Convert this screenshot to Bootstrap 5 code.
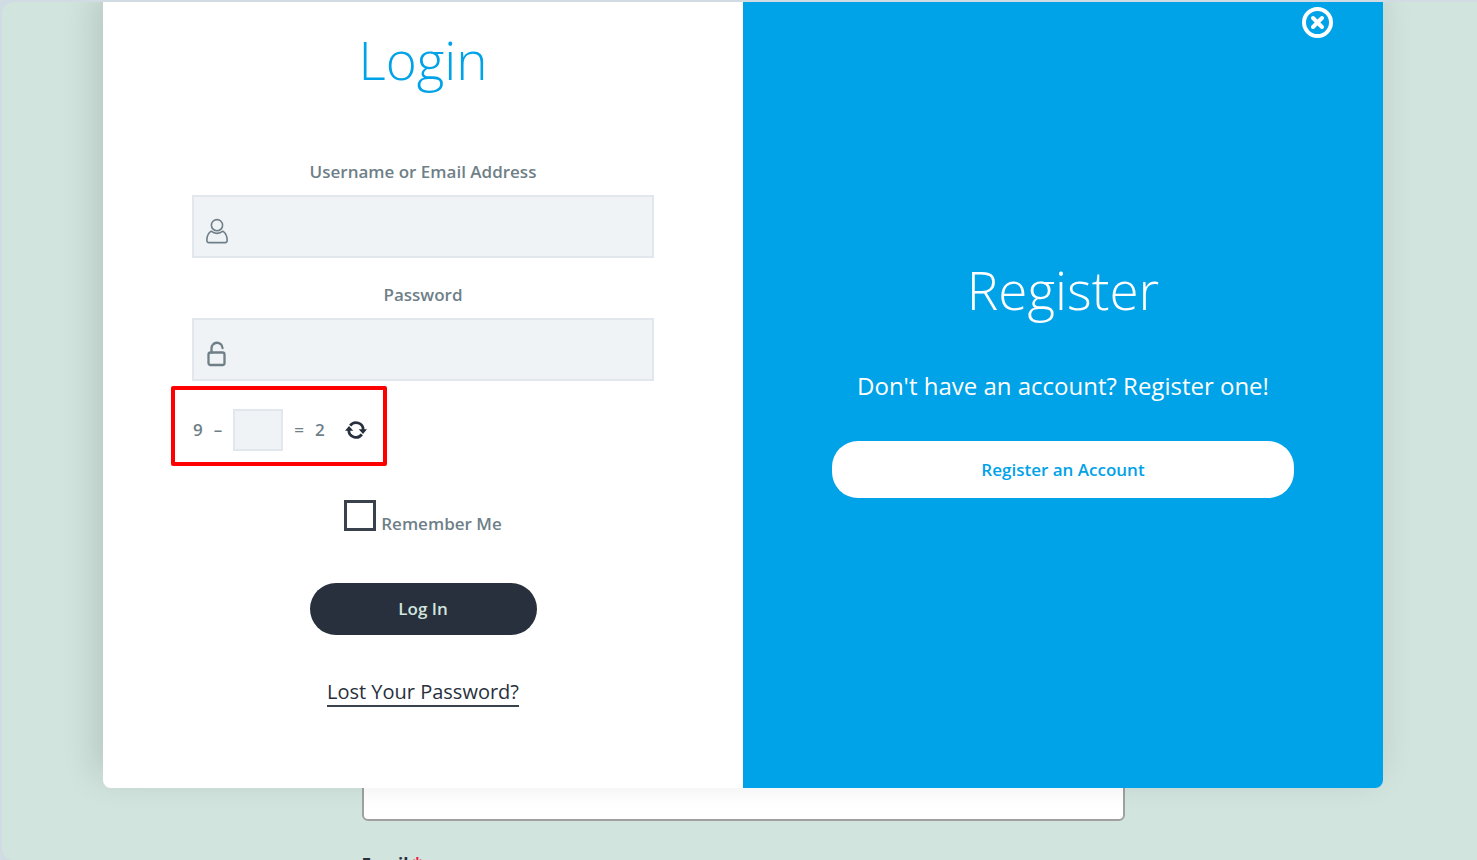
<!DOCTYPE html>
<html lang="en">
<head>
<meta charset="utf-8">
<meta name="viewport" content="width=device-width, initial-scale=1">
<title>Login</title>
<link href="https://cdn.jsdelivr.net/npm/bootstrap@5.3.0/dist/css/bootstrap.min.css" rel="stylesheet">
<style>
  body { background: #d1dbe4; font-family: "Open Sans", "Noto Sans", sans-serif; font-size: 17px; line-height: 24px; color: #6f7f88; }
  .stage { height: 100vh; padding: 2px 0 0 2px; }
  .page-area { background: #d1e4dd; border-radius: 12px 0 0 12px; padding-left: 7px; }
  .page-form { max-width: 763px; padding-top: 743px; }
  .page-input { height: 76px; border: 2px solid #a0a0a0; border-radius: 6px; background: #fff; }
  .page-label { color: #28303d; font-weight: 700; }
  .page-label span { color: #f0143c; }
  .auth-layer { left: 7px; }
  .auth-box { max-width: 1280px; border-radius: 0 0 8px 8px; box-shadow: -6px -12px 36px rgba(0, 0, 0, .14); }
  .auth-login { background: #fff; padding: 26px 89px 81px; border-radius: 0 0 0 8px; }
  .auth-register { background: #00a2e8; color: #fff; padding: 0 89px 34px; border-radius: 0 0 8px 0; }
  .auth-title { font-size: 53px; line-height: 64px; font-weight: 300; }
  .auth-login .auth-title { color: #00a2e8; margin-bottom: 68px; }
  .auth-register .auth-title { margin-bottom: 46px; }
  .auth-label { font-weight: 600; margin-bottom: 11px; }
  .field + .field { margin-top: 25px; }
  .field input { height: 63px; padding-left: 48px; }
  .field svg { left: 14px; top: 23px; }
  .auth-login .form-control { background-color: #eff3f6; border: 2px solid #e2e7ee; border-radius: 0; }
  .captcha { align-self: flex-start; margin: 5px 0 34px -21px; padding: 19px 16px 11px 18px; border: 4px solid #f00; border-radius: 2px; gap: 11px; font-weight: 600; }
  .captcha .form-control { width: 50px; height: 42px; }
  .captcha .refresh { margin-left: 9px; color: #28303d; line-height: 0; }
  .remember { gap: 5px; margin-bottom: 47px; }
  .remember input[type=checkbox] { width: 32px; height: 31px; margin: 0 0 5px; border: 3px solid #39414d; border-radius: 0; }
  .remember label { font-weight: 600; }
  .pill { border-radius: 26px; font-size: 17px; line-height: 24px; font-weight: 600; }
  .pill-dark, .pill-dark:hover { background: #28303d; color: #d1e4dd; width: 227px; padding: 14px; margin-bottom: 44px; }
  .pill-light, .pill-light:hover { background: #fff; color: #00a2e8; height: 57px; }
  .lost { font-size: 20px; line-height: 26px; color: #28303d; border-bottom: 2px solid #39414d; }
  .invite { font-size: 24px; line-height: 36px; margin-bottom: 37px; }
  .close-auth { top: 5px; right: 50px; line-height: 0; }
</style>
</head>
<body>
<div class="stage overflow-hidden">
  <div class="page-area position-relative h-100 overflow-hidden">
    <div class="page-form mx-auto">
      <input id="email-above" type="text" class="page-input w-100 d-block" aria-label="Name">
      <label class="page-label d-block pt-4 mt-2" for="email-above">Email <span>*</span></label>
    </div>
    <div class="auth-layer position-absolute top-0 end-0">
      <main class="auth-box row g-0 mx-auto position-relative">
        <form class="auth-login col-6 d-flex flex-column align-items-center">
          <h1 class="auth-title">Login</h1>
          <div class="field w-100 text-center">
            <label class="auth-label d-block" for="user">Username or Email Address</label>
            <div class="position-relative">
              <input id="user" type="text" class="form-control">
              <svg class="position-absolute" width="22" height="26" viewBox="0 0 22 26" fill="none" stroke="currentColor" stroke-width="1.6" stroke-linejoin="round"><circle cx="11" cy="7.2" r="5.6"/><path d="M5.2 13.2C2.6 14.9.8 18.500.8 22.300c0 1.500.7 2.300 2.100 2.300h16.200c1.400 0 2.100-.8 2.100-2.300 0-3.800-1.800-7.400-4.400-9.100-1.700 1.500-3.600 2.200-5.800 2.200s-4.100-.7-5.800-2.200z"/></svg>
            </div>
          </div>
          <div class="field w-100 text-center">
            <label class="auth-label d-block" for="pass">Password</label>
            <div class="position-relative">
              <input id="pass" type="password" class="form-control">
              <svg class="position-absolute" width="22" height="26" viewBox="0 0 22 26" fill="none" stroke="currentColor" stroke-width="2.300" stroke-linecap="round"><rect x="2.500" y="11.500" width="16" height="12.500" rx="2"/><path d="M5.500 11.500V7.500a5.500 5.500 0 0 1 11-.5"/></svg>
            </div>
          </div>
          <div class="captcha d-flex align-items-center">
            <span>9</span><span>–</span>
            <input type="text" class="form-control p-1" aria-label="Missing number">
            <span>=</span><span>2</span>
            <button type="button" class="refresh btn p-0 border-0" aria-label="New sum"><svg width="22" height="18" viewBox="0 0 22 18" fill="none" stroke="currentColor" stroke-width="2.800"><path d="M5.200 4.600A7.200 7.200 0 0 1 18.200 9"/><path d="M16.800 13.400A7.200 7.200 0 0 1 3.800 9"/><path d="M0 9.800 4 5l4.300 4.800zM22 8.200 18 13l-4.300-4.800z" fill="currentColor" stroke="none"/></svg></button>
          </div>
          <div class="remember d-flex align-items-end">
            <input id="remember" type="checkbox" class="form-check-input">
            <label for="remember">Remember Me</label>
          </div>
          <button type="submit" class="pill pill-dark btn border-0">Log In</button>
          <a class="lost text-decoration-none" href="#">Lost Your Password?</a>
        </form>
        <section class="auth-register col-6 d-flex flex-column justify-content-center text-center">
          <h2 class="auth-title">Register</h2>
          <p class="invite">Don't have an account? Register one!</p>
          <button type="button" class="pill pill-light btn border-0 w-100">Register an Account</button>
        </section>
        <button type="button" class="close-auth btn p-0 border-0 position-absolute w-auto" aria-label="Close"><svg width="31" height="31" viewBox="0 0 31 31" fill="none" stroke="#fff" stroke-width="4" stroke-linecap="round"><circle cx="15.500" cy="15.500" r="13.500"/><path d="m11 11 9 9m0-9-9 9"/></svg></button>
      </main>
    </div>
  </div>
</div>
<script src="https://cdn.jsdelivr.net/npm/bootstrap@5.3.0/dist/js/bootstrap.bundle.min.js"></script>
</body>
</html>
